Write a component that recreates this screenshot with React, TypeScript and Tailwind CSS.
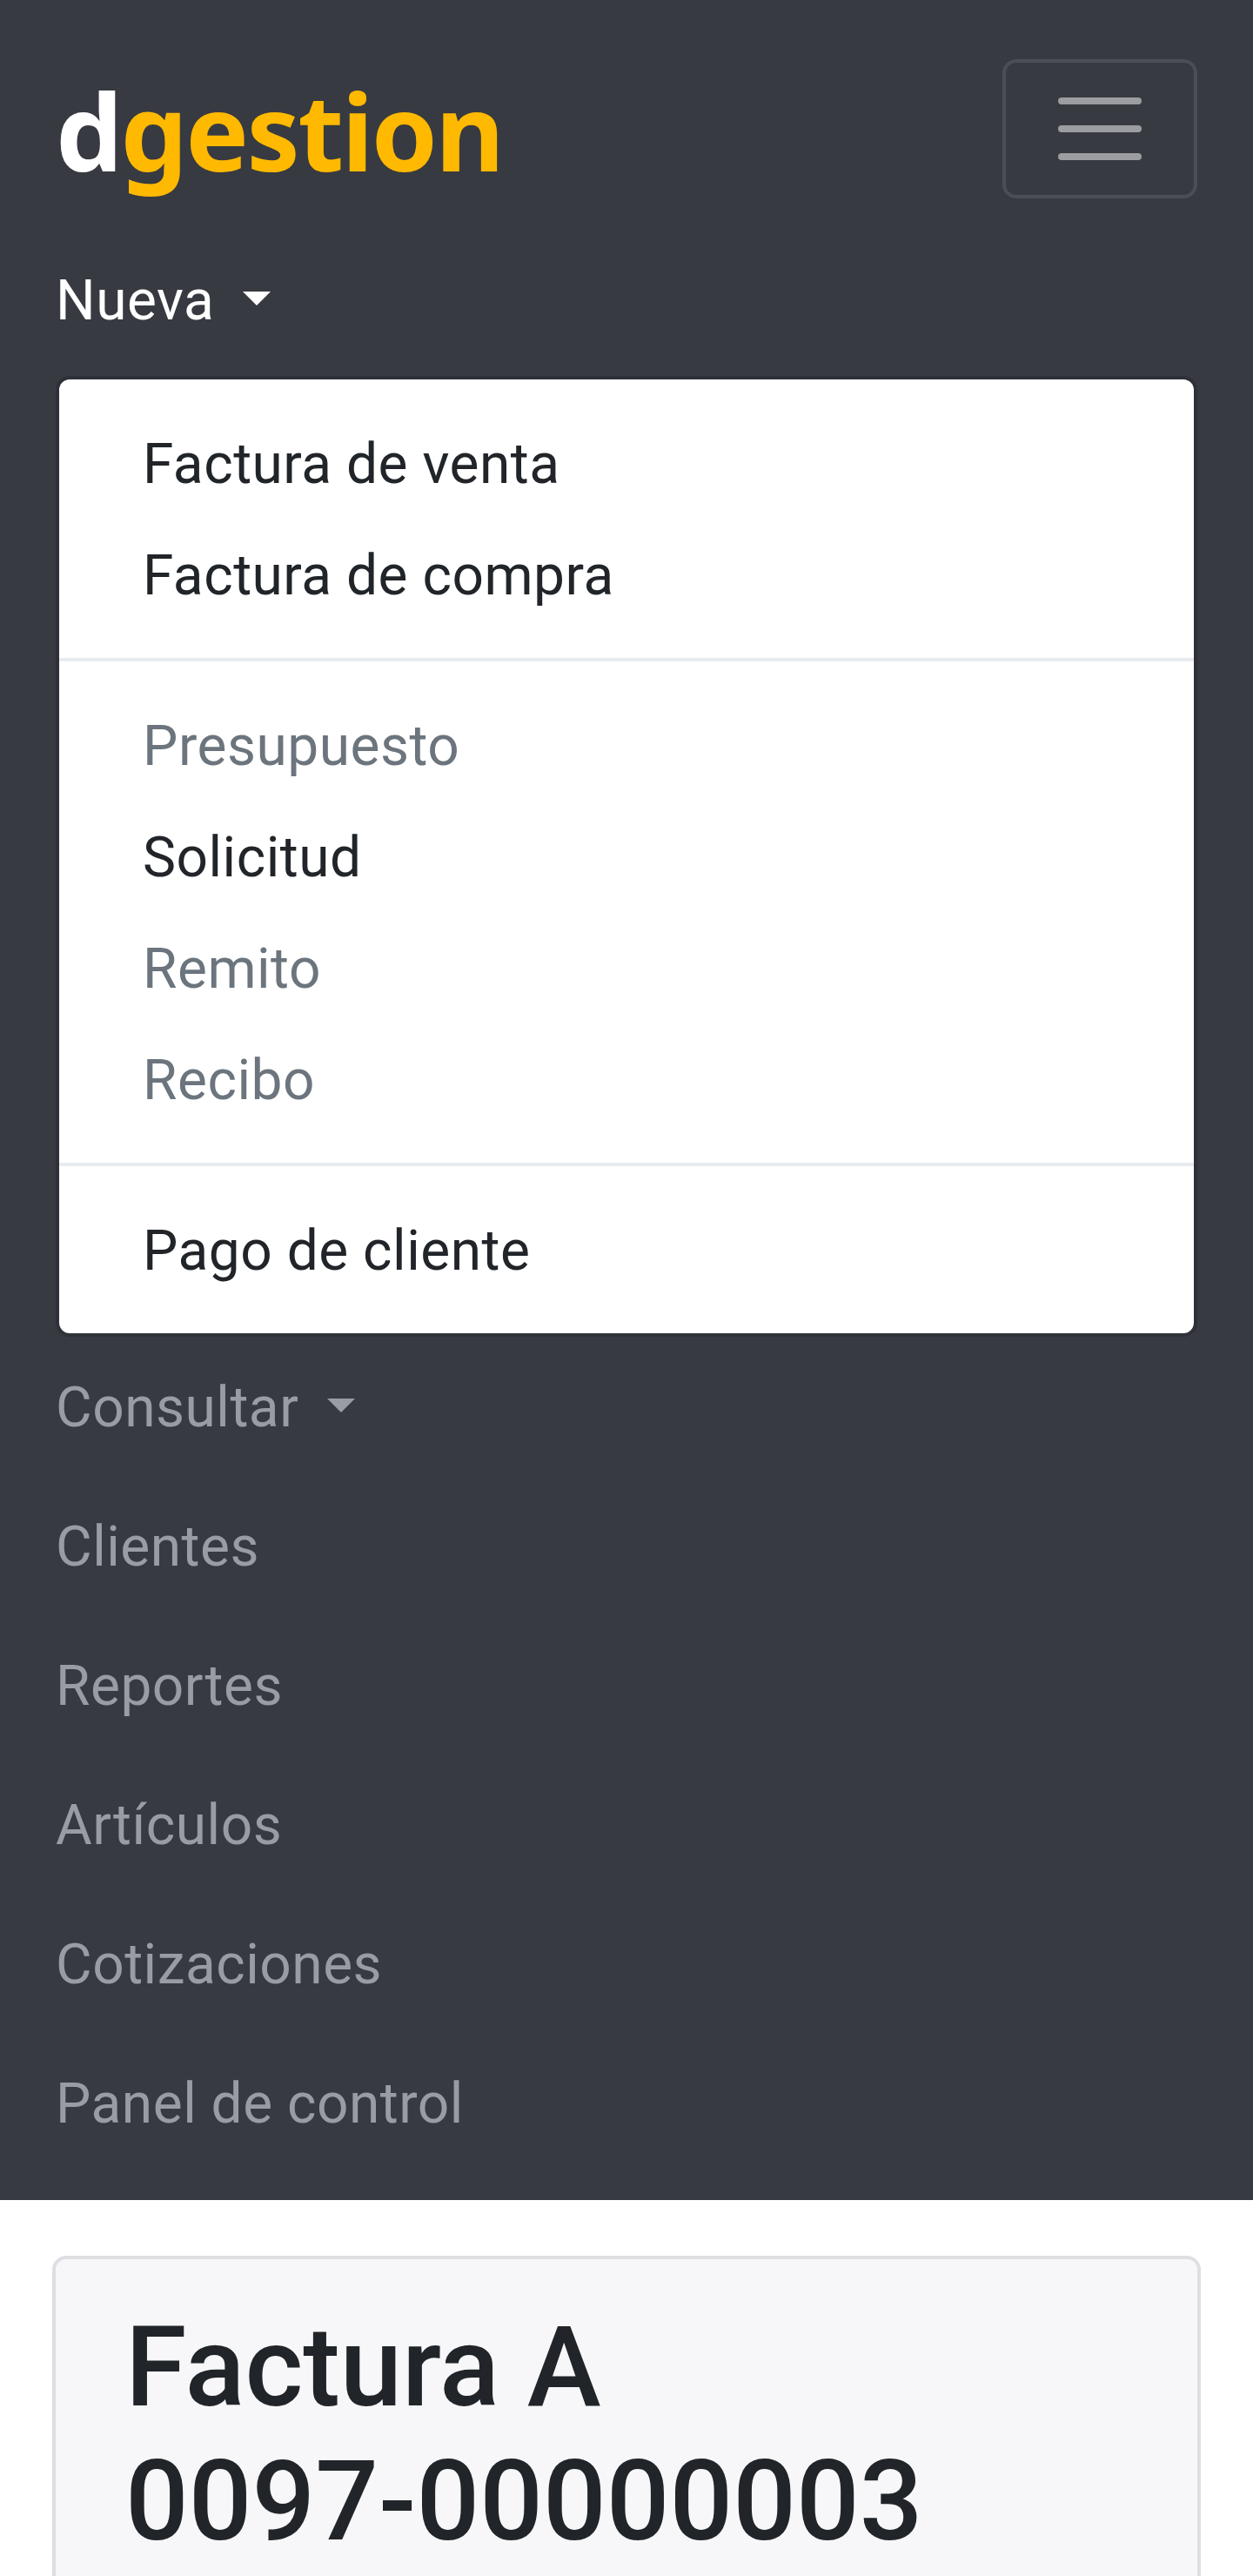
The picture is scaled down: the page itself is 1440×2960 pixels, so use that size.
const roboto = "font-['Roboto',sans-serif]";

function Caret() {
  return (
    <span className="ml-4 inline-block h-0 w-0 border-x-16 border-t-16 border-x-transparent border-t-current align-[16px]" />
  );
}

function MenuItem({ label, disabled }: { label: string; disabled?: boolean }) {
  return (
    <a className={`block px-24 pt-[18px] pb-[14px] text-[64px] leading-[96px] tracking-[0.5px] ${disabled ? "text-[#6c757d]" : "text-[#212529]"}`}>
      {label}
    </a>
  );
}

function Divider() {
  return <div className="my-8 h-1 bg-[#e9ecef]" />;
}

function NavLink({ label, caret }: { label: string; caret?: boolean }) {
  return (
    <a className="block pt-[34px] pb-[30px] text-[64px] leading-[96px] tracking-[0.5px] text-[#9a9ca4]">
      {label} {caret && <Caret />}
    </a>
  );
}

export default function App() {
  return (
    <div className={`h-[2960px] overflow-hidden bg-white ${roboto}`}>
      <nav className="bg-[#373a41] px-16 py-8">
        <div className="flex h-[232px] items-center justify-between">
          <a className="pt-1 font-['Noto_Sans',sans-serif] text-[122px] leading-none font-bold tracking-[-2.5px] text-[#ffb900]">
            <span className="text-white">d</span>gestion
          </a>
          <button className="h-40 w-56 rounded-2xl border-4 border-white/10 px-12 py-4">
            <svg viewBox="0 0 30 30" className="block h-[120px] w-[120px]">
              <path
                d="M4 7h22M4 15h22M4 23h22"
                stroke="rgba(255,255,255,0.5)"
                strokeWidth="2"
                strokeLinecap="round"
              />
            </svg>
          </button>
        </div>

        <a className="block pt-[34px] pb-[30px] text-[64px] leading-[96px] tracking-[0.5px] text-white">
          Nueva <Caret />
        </a>
        <div className="mt-2 rounded-2xl border-4 border-black/15 bg-white bg-clip-padding py-8">
          <MenuItem label="Factura de venta" />
          <MenuItem label="Factura de compra" />
          <Divider />
          <MenuItem label="Presupuesto" disabled />
          <MenuItem label="Solicitud" />
          <MenuItem label="Remito" disabled />
          <MenuItem label="Recibo" disabled />
          <Divider />
          <MenuItem label="Pago de cliente" />
        </div>

        <NavLink label="Consultar" caret />
        <NavLink label="Clientes" />
        <NavLink label="Reportes" />
        <NavLink label="Artículos" />
        <NavLink label="Cotizaciones" />
        <NavLink label="Panel de control" />
      </nav>

      <main className="px-[60px] pt-16">
        <div className="h-[600px] rounded-2xl border-4 border-[#dfdfe3] bg-[#f7f7f9] px-20 py-12">
          <h2 className="text-[128px] leading-[1.2] font-medium text-[#212529]">
            Factura A
            <br />
            0097-00000003
          </h2>
        </div>
      </main>
    </div>
  );
}
